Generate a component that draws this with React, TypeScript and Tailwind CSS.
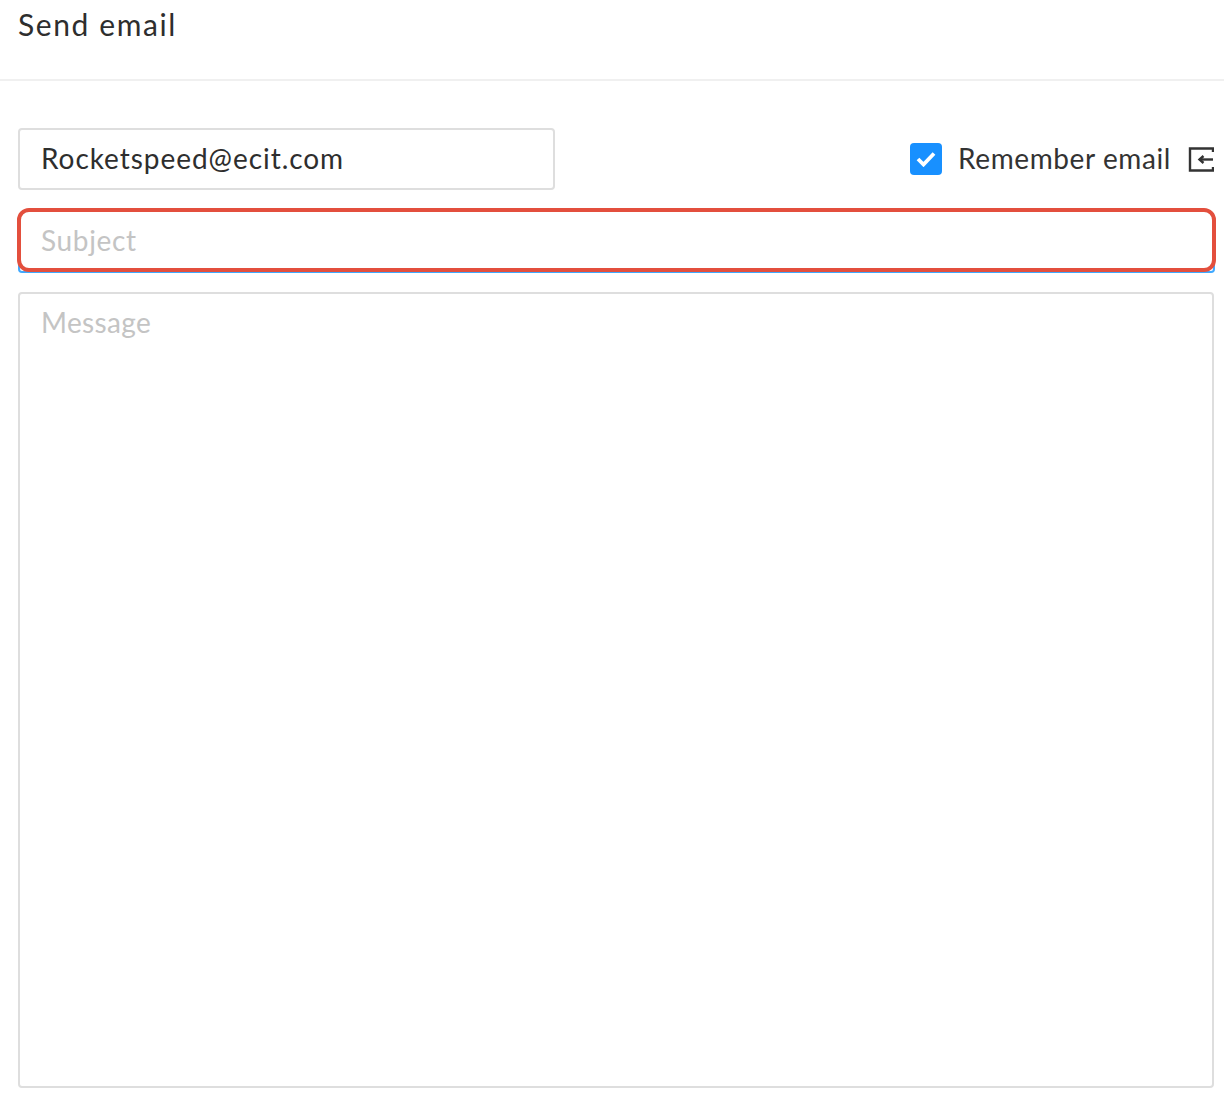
import React from "react";

const FONT = "font-['Lato','Liberation_Sans',sans-serif]";

const LeaveIcon = () => (
  <svg width="26" height="26" viewBox="0 0 26 26" fill="none" stroke="#333" strokeWidth="2.4">
    <path d="M25 6V2.5H2V24.5H25V21" />
    <path d="M25 13.5H11" />
    <path d="M15.5 10L11.5 13.5L15.5 17" />
  </svg>
);

const App: React.FC = () => {
  return (
    <div className={`w-[1224px] h-[1102px] bg-white text-[#2e2e2e] ${FONT}`}>
      <div className="h-[81px] border-b-2 border-[#f0f0f0] pl-[18px] pt-[4px]">
        <h2 className="text-[30px] leading-[40px] font-normal tracking-[1.6px]">Send email</h2>
      </div>

      <form className="pt-[47px] pl-[18px] pr-[10px] flex flex-col">
        <div className="flex items-center justify-between">
          <input
            type="text"
            readOnly
            value="Rocketspeed@ecit.com"
            className="w-[537px] h-[62px] border-2 border-[#dedede] rounded-[4px] pl-[21px] pb-[2px] text-[28px] tracking-[0.95px] text-[#2e2e2e] outline-none"
          />
          <div className="flex items-center">
            <span className="w-8 h-8 rounded-[4px] bg-[#1890ff] flex items-center justify-center">
              <svg width="20" height="16" viewBox="0 0 20 16" fill="none" stroke="#fff" strokeWidth="3.8">
                <path d="M2 8L7.5 13.5L18 2.5" />
              </svg>
            </span>
            <span className="ml-4 pb-[2px] text-[28px] leading-8 tracking-[0.6px] text-[#333]">Remember email</span>
            <span className="ml-[17px] flex"><LeaveIcon /></span>
          </div>
        </div>

        <div className="relative mt-[19px] mr-[-1px]">
          <input
            type="text"
            placeholder="Subject"
            className="block w-full h-[64px] border-2 border-[#40a9ff] rounded-t-[12px] rounded-b-[4px] pl-[21px] pb-[2px] text-[28px] tracking-[0.65px] placeholder:text-[#c4c4c4] outline-none"
          />
          <div className="absolute left-[-1px] right-[-1px] top-[-1px] h-[64px] border-4 border-[#e34f3d] rounded-[12px] pointer-events-none" />
        </div>

        <textarea
          placeholder="Message"
          className="mt-[19px] w-full h-[796px] border-2 border-[#dedede] rounded-[4px] pl-[21px] pt-[8px] text-[28px] leading-[40px] tracking-[0.35px] placeholder:text-[#c4c4c4] outline-none resize-none"
        />
      </form>
    </div>
  );
};

export default App;
